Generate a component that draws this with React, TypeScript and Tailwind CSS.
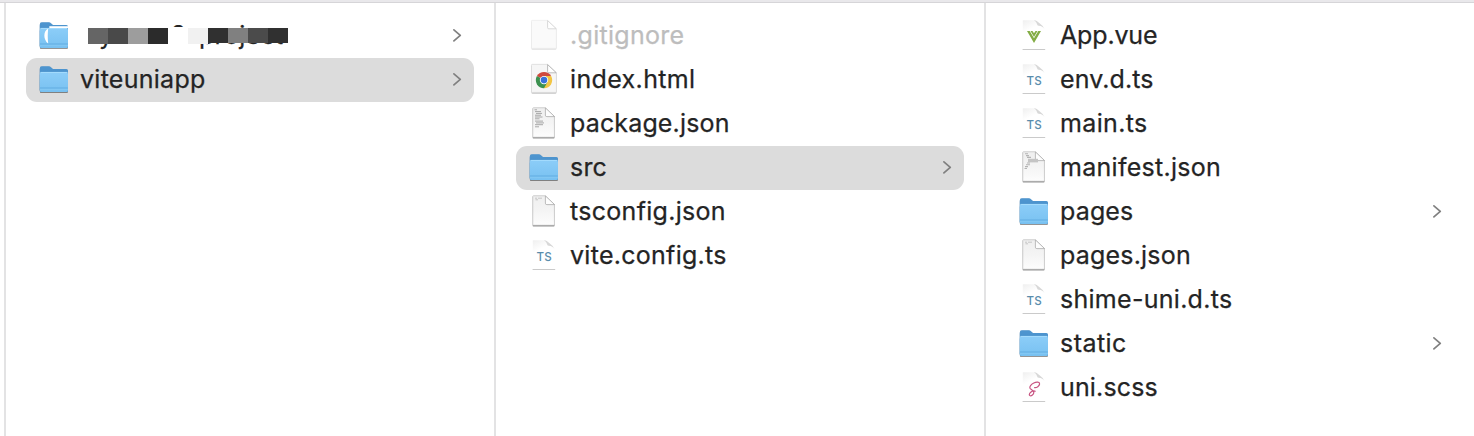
import React from "react";

type IconKind = "folder" | "folderBadge" | "blank" | "chrome" | "text" | "manifest" | "json" | "ts" | "vue" | "sass";

type Entry = {
  name: string;
  icon: IconKind;
  open?: boolean;
  selected?: boolean;
  dimmed?: boolean;
  redacted?: boolean;
  tracking?: string;
};

const columns: Entry[][] = [
  [
    { name: "project", icon: "folderBadge", open: true, redacted: true },
    { name: "viteuniapp", icon: "folder", open: true, selected: true, tracking: "tracking-[0.27px]" },
  ],
  [
    { name: ".gitignore", icon: "blank", dimmed: true, tracking: "tracking-[0.3px]" },
    { name: "index.html", icon: "chrome", tracking: "tracking-[0.36px]" },
    { name: "package.json", icon: "text", tracking: "tracking-[0.15px]" },
    { name: "src", icon: "folder", open: true, selected: true, tracking: "tracking-[0.2px]" },
    { name: "tsconfig.json", icon: "json", tracking: "tracking-[0.3px]" },
    { name: "vite.config.ts", icon: "ts", tracking: "tracking-[0.28px]" },
  ],
  [
    { name: "App.vue", icon: "vue", tracking: "tracking-[-0.15px]" },
    { name: "env.d.ts", icon: "ts", tracking: "tracking-[0.1px]" },
    { name: "main.ts", icon: "ts", tracking: "tracking-[0.35px]" },
    { name: "manifest.json", icon: "manifest", tracking: "tracking-[0.28px]" },
    { name: "pages", icon: "folder", open: true, tracking: "tracking-[0.15px]" },
    { name: "pages.json", icon: "json", tracking: "tracking-[0.2px]" },
    { name: "shime-uni.d.ts", icon: "ts", tracking: "tracking-[0.28px]" },
    { name: "static", icon: "folder", open: true, tracking: "tracking-[0.45px]" },
    { name: "uni.scss", icon: "sass", tracking: "tracking-[0.15px]" },
  ],
];

function Gradients() {
  return (
    <svg className="absolute size-0" aria-hidden="true">
      <defs>
        <linearGradient id="front" x1="0" y1="0" x2="0" y2="1">
          <stop offset="0" stopColor="#8ccdf8" />
          <stop offset="1" stopColor="#78c1f1" />
        </linearGradient>
        <linearGradient id="back" x1="0" y1="0" x2="0" y2="1">
          <stop offset="0" stopColor="#4f96d0" />
          <stop offset="1" stopColor="#3f86c4" />
        </linearGradient>
        <linearGradient id="paper" x1="0" y1="0" x2="0" y2="1">
          <stop offset="0" stopColor="#efefef" />
          <stop offset="0.5" stopColor="#f4f4f4" />
          <stop offset="1" stopColor="#fdfdfd" />
        </linearGradient>
        <linearGradient id="sheet" x1="0" y1="0" x2="0.4" y2="1">
          <stop offset="0" stopColor="#efefef" />
          <stop offset="0.4" stopColor="#ffffff" />
        </linearGradient>
        <filter id="soft" x="-20%" y="-20%" width="140%" height="150%">
          <feDropShadow dx="0" dy="0.7" stdDeviation="0.7" floodColor="#000" floodOpacity="0.6" />
        </filter>
        <filter id="faint" x="-20%" y="-20%" width="140%" height="150%">
          <feDropShadow dx="0" dy="0.5" stdDeviation="0.6" floodColor="#000" floodOpacity="0.5" />
        </filter>
      </defs>
    </svg>
  );
}

function Folder({ badge }: { badge?: boolean }) {
  return (
    <g transform="translate(-0.2 -0.1)">
      <g filter="url(#soft)">
        <path d="M2 6.5Q2 4.3 4 4.3H11Q12.3 4.3 13.2 5.3L14.5 6.5Q15.2 7.1 16.5 7.1H28.5Q30.2 7.1 30.2 8.8V28Q30.2 30.2 28.2 30.2H4Q2 30.2 2 28Z" fill="url(#back)" />
        <path d="M2 12Q2 10 4 10H28.4Q30.2 10 30.2 12V28Q30.2 30.2 28.2 30.2H4Q2 30.2 2 28Z" fill="url(#front)" />
      </g>
      <path d="M2.6 10.5H29.6" stroke="#a9defd" strokeWidth="0.9" />
      <path d="M2.2 26.2H30" stroke="#59a5dc" strokeWidth="0.9" />
      <path d="M2.2 27.3H30" stroke="#87caf4" strokeWidth="0.9" />
      {badge && (
        <g>
          <path d="M10.4 10.5C5.4 13 5.2 21.5 10.4 25.6C9.8 20.5 9.8 15.5 10.4 10.5Z" fill="#fff" />
          <path d="M11.5 9.2H30.6" stroke="#fff" strokeWidth="1.8" />
        </g>
      )}
    </g>
  );
}

function PlainDoc({ kind }: { kind: IconKind }) {
  return (
    <g>
      <g filter="url(#soft)">
        <path d="M4.6 2.4Q4.6 1.6 5.4 1.6H17.2L26.6 10.6V30.6Q26.6 31.6 25.8 31.6H5.4Q4.6 31.6 4.6 30.6Z" fill="url(#paper)" />
      </g>
      <path d="M5.4 1.8H17.2L26.4 10.6V31.4H4.8V2.4Z" fill="none" stroke="#b0b0b0" strokeWidth="0.5" />
      <path d="M5 31.4H26.2" stroke="#8f8f8f" strokeWidth="0.6" />
      <path d="M17.4 1.9V9.2Q17.4 10.6 18.8 10.6H26.6Z" fill="#fdfdfd" stroke="#a0a0a0" strokeWidth="0.7" />
      {kind === "json" && <path d="M7 4.2H9M10 4.2H14M7.5 5.8H10" stroke="#b4b4b4" strokeWidth="0.7" />}
      {kind === "text" && (
        <path d="M6.5 3.8H9M7 5.6H13M8 7.4H14M7 9.2H13M7 11H14.5M7 12.8H11.5M7 15.1H15M8 16.9H16M7 18.7H15M7 20.8H11" stroke="#9a9a9a" strokeWidth="0.85" />
      )}
      {kind === "manifest" && (
        <g>
          <path d="M7 3.8H10M8 5.6H11M9 7.4H13M9 13H12M8 14.8H12M7 16.6H10M6.5 18.5H9" stroke="#b4b4b4" strokeWidth="1.1" />
          <path d="M10 8.8H20V12.4H10Z" fill="#c4c4c4" />
        </g>
      )}
    </g>
  );
}

function WideDoc({ chrome }: { chrome?: boolean }) {
  return (
    <g opacity={chrome ? 1 : 0.55}>
      <path d="M4.2 2.4H19.6L28.4 10.8V29.6Q28.4 30.4 27.6 30.4H4.2Q3.5 30.4 3.5 29.6V3.2Q3.5 2.4 4.2 2.4Z" fill="#f6f6f6" stroke="#d4d4d4" strokeWidth="0.4" filter="url(#faint)" />
      <path d="M19.6 2.6V9.6Q19.6 10.8 20.8 10.8H28.3Z" fill="#fff" stroke="#a0a0a0" strokeWidth="0.7" />
      {chrome && (
        <g transform="translate(0 -1.4)">
          <path d="M16 19.5L8.9 15.4A8.2 8.2 0 0 1 23.1 15.4Z" fill="#cf4a3e" />
          <path d="M16 19.5L23.1 15.4A8.2 8.2 0 0 1 16 27.7Z" fill="#f2c544" />
          <path d="M16 19.5V27.7A8.2 8.2 0 0 1 8.9 15.4Z" fill="#3c9150" />
          <path d="M16 15.4H23.1L19.5 21.5Z" fill="#f2c544" />
          <path d="M12.4 21.5L16 27.7L19.5 21.5Z" fill="#3c9150" />
          <circle cx="16" cy="19.5" r="4.2" fill="#fff" />
          <circle cx="16" cy="19.5" r="3.3" fill="#3972d9" />
        </g>
      )}
    </g>
  );
}

function CodeDoc({ kind }: { kind: IconKind }) {
  return (
    <g>
      <path d="M4.8 2.2H16.3Q18 2.6 19.2 4.9Q19.8 6.4 21.5 6.4Q24.5 6.6 26.4 11V30H4.8Z" fill="url(#sheet)" />
      <path d="M16 2.2Q18.5 3.4 19.2 6.6Q19.4 7.8 20.8 7.8Q24.6 8 26.6 11.2Q25.5 8 22.4 6L18.8 3Q17.5 2.1 16 2.2Z" fill="#d8d8d8" />
      <path d="M4.6 31.5H27.2" stroke="#c4c4c4" strokeWidth="0.9" />
      {kind === "ts" && (
        <text x="16.1" y="23.1" textAnchor="middle" fontSize="11.6" fontWeight="500" fill="#5a8dac" className="font-['Inter',sans-serif] tracking-normal">
          TS
        </text>
      )}
      {kind === "vue" && (
        <g>
          <path d="M9 13H11.7L16 20.2L20.3 13H23L16 25Z" fill="#83ac45" />
          <path d="M12.5 13H14.5L16 15.3L17.5 13H19.5L16 19Z" fill="#83ac45" />
        </g>
      )}
      {kind === "sass" && (
        <path d="M16.6 17.6C18.6 18 21.4 15.9 21.6 13.9C21.7 11.9 18.6 11.6 15.8 13C13 14.4 11.2 16.6 12 18.2C12.8 19.6 15.6 20.3 15.8 22.2C16 24.3 13.2 26.4 11.8 25.6C10.4 24.7 12 22.3 14.2 21.2C15.4 20.6 16.4 20.7 17.2 21.2" fill="none" stroke="#c85482" strokeWidth="1.2" strokeLinecap="round" />
      )}
    </g>
  );
}

function FileIcon({ kind }: { kind: IconKind }) {
  return (
    <svg viewBox="0 0 32 34" className="mb-[2px] h-[34px] w-8 shrink-0 overflow-visible">
      {(kind === "folder" || kind === "folderBadge") && <Folder badge={kind === "folderBadge"} />}
      {(kind === "blank" || kind === "chrome") && <WideDoc chrome={kind === "chrome"} />}
      {(kind === "text" || kind === "json" || kind === "manifest") && <PlainDoc kind={kind} />}
      {(kind === "ts" || kind === "vue" || kind === "sass") && <CodeDoc kind={kind} />}
    </svg>
  );
}

function RedactedName({ name }: { name: string }) {
  return (
    <div className="relative h-11 flex-1">
      <span className="absolute left-[19px] top-[3px] leading-9">y</span>
      <span className="absolute left-[92px] top-[3px] leading-9">?</span>
      <span className="absolute left-[119px] top-[3px] leading-9 tracking-[0.3px]">{name}</span>
      <div className="absolute left-[8px] top-[14px] flex h-4 w-[200px]">
        <i className="w-5 bg-[#656565]" />
        <i className="w-5 bg-[#494949]" />
        <i className="w-5 bg-[#9d9d9d]" />
        <i className="w-5 bg-[#2b2b2b]" />
        <i className="-mt-px h-[18px] w-5 bg-white" />
        <i className="w-5 bg-[#f1f1f1]" />
        <i className="-mt-[2px] h-[17px] w-5 border-t-2 border-white bg-[#303030]" />
        <i className="h-[15px] w-5 bg-[#808080]" />
        <i className="h-[15px] w-5 bg-[#4b4b4b]" />
        <i className="-mt-[5px] h-[20px] w-5 border-t-5 border-white bg-[#303030]" />
      </div>
    </div>
  );
}

function Row({ entry }: { entry: Entry }) {
  return (
    <li className={`flex h-11 items-center rounded-[11px] pl-3 pr-[11px] ${entry.selected ? "bg-[#dcdcdc]" : ""}`}>
      <FileIcon kind={entry.icon} />
      <div className="flex h-11 flex-1 items-center pl-[10px]">
        {entry.redacted ? (
          <RedactedName name={entry.name} />
        ) : (
          <span className={`whitespace-nowrap pb-[2px] leading-[42px] ${entry.tracking ?? ""} ${entry.dimmed ? "text-[#bdbdbd]" : ""}`}>
            {entry.name}
          </span>
        )}
      </div>
      {entry.open && (
        <svg viewBox="0 0 12 16" className="mb-[2px] h-4 w-3 shrink-0" fill="none" stroke="#808080" strokeWidth="1.7" strokeLinecap="round" strokeLinejoin="round">
          <path d="M2.9 2.9L9.3 8.4L2.9 13.9" />
        </svg>
      )}
    </li>
  );
}

export default function App() {
  return (
    <div className="flex h-[436px] w-[1474px] flex-col overflow-hidden bg-white font-['Inter','Liberation_Sans',sans-serif] text-[25px] text-[#242424] [-webkit-text-stroke:0.25px]">
      <Gradients />
      <div className="h-[3px] shrink-0 border-b border-[#d6d5d8] bg-[#e9e8eb]" />
      <div className="flex flex-1 pl-1">
        {columns.map((entries, i) => (
          <ul key={i} className="w-[490px] shrink-0 border-l-2 border-[#e3e3e4] pl-5 pr-5 pt-[11px]">
            {entries.map((entry) => (
              <Row key={entry.name} entry={entry} />
            ))}
          </ul>
        ))}
      </div>
    </div>
  );
}
